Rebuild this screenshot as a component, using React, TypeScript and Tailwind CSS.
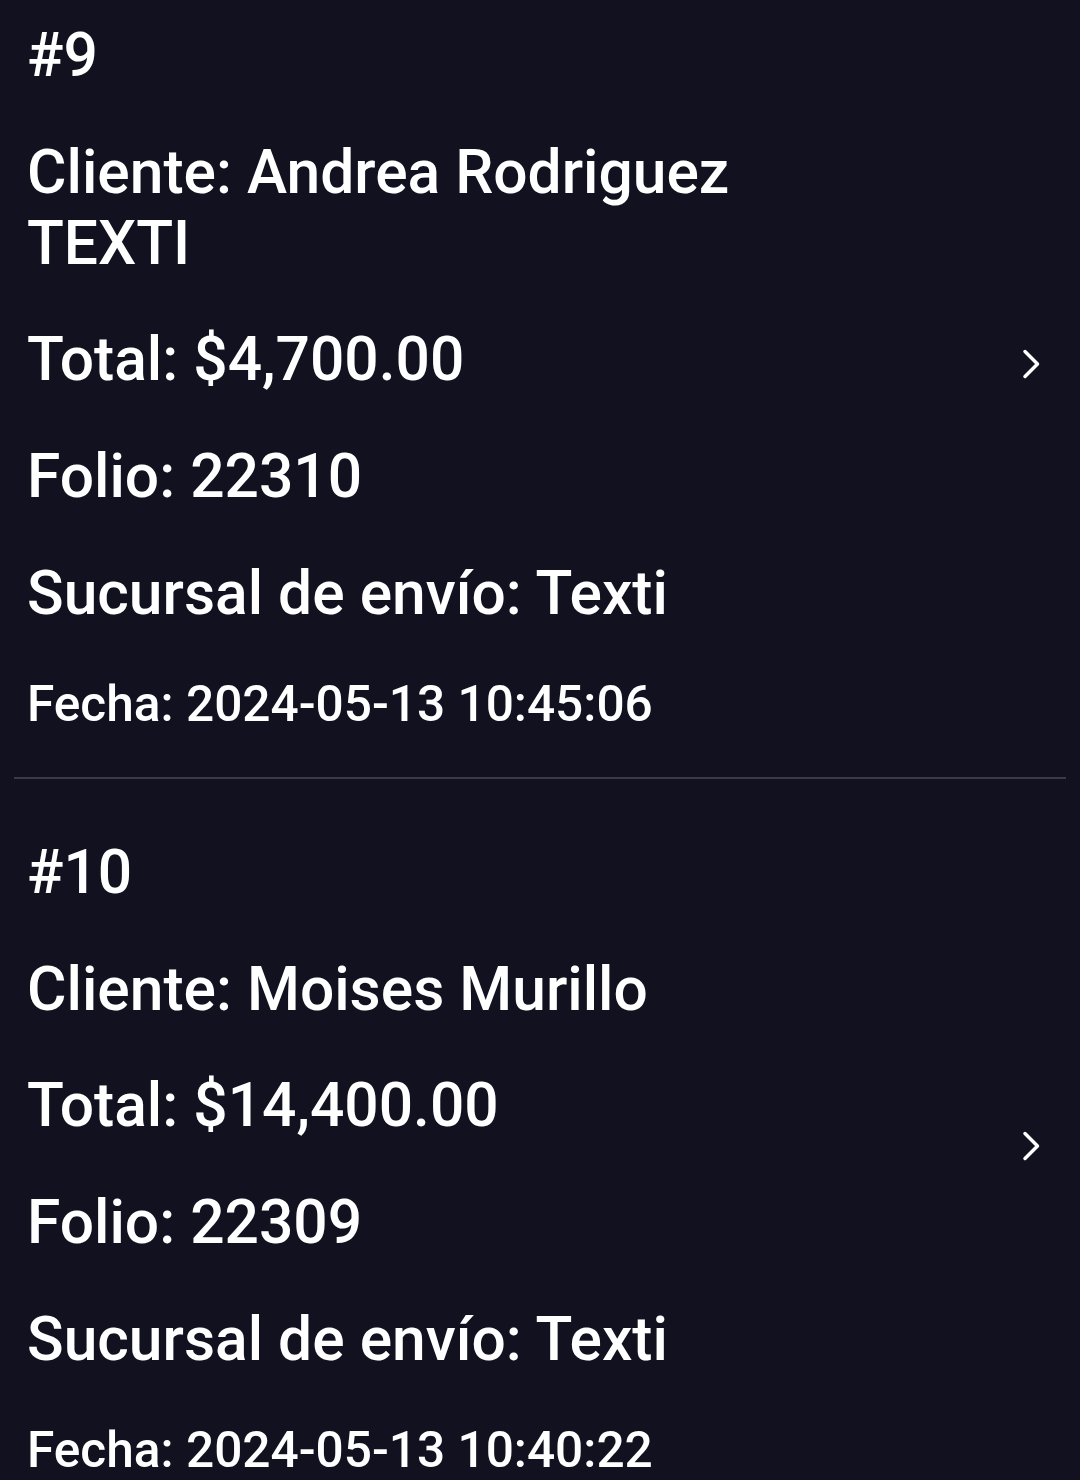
import React from 'react';

type Order = {
  num: number;
  cliente: string[];
  total: string;
  folio: string;
  sucursal: string;
  fecha: string;
};

const orders: Order[] = [
  { num: 9, cliente: ['Andrea Rodriguez', 'TEXTI'], total: '$4,700.00', folio: '22310', sucursal: 'Texti', fecha: '2024-05-13 10:45:06' },
  { num: 10, cliente: ['Moises Murillo'], total: '$14,400.00', folio: '22309', sucursal: 'Texti', fecha: '2024-05-13 10:40:22' },
];

const Chevron = () => (
  <svg width="24" height="36" viewBox="0 0 24 36" className="shrink-0 -translate-y-[13px]">
    <polyline points="6,5.5 18.5,18 6,30.5" fill="none" stroke="#ffffff" strokeWidth="3.5" strokeLinecap="round" strokeLinejoin="round" />
  </svg>
);

const OrderRow = ({ o }: { o: Order }) => (
  <div className="flex items-center pt-[58px] pb-[43px] pl-[27px] pr-[37px]">
    <div className="flex-1 flex flex-col gap-[45px] text-white font-medium">
      <div className="text-[60.5px] leading-[72px]">#{o.num}</div>
      <div className="text-[60.5px] leading-[71px]">
        Cliente: {o.cliente[0]}
        {o.cliente.slice(1).map(l => (
          <div key={l}>{l}</div>
        ))}
      </div>
      <div className="text-[60.5px] leading-[72px]">Total: {o.total}</div>
      <div className="text-[60.5px] leading-[72px]">Folio: {o.folio}</div>
      <div className="text-[60.5px] leading-[72px]">Sucursal de envío: {o.sucursal}</div>
      <div className="text-[49.6px] leading-[59px]">Fecha: {o.fecha}</div>
    </div>
    <Chevron />
  </div>
);

export default function App() {
  return (
    <div className="h-[1480px] overflow-hidden bg-[#111120]" style={{ fontFamily: 'Roboto, "Noto Sans", sans-serif' }}>
      <div className="-mt-[38px]">
        {orders.map((o, i) => (
          <div key={o.num}>
            {i > 0 && <div className="mx-[14px] h-[2px] bg-[#3a3a48]" />}
            <OrderRow o={o} />
          </div>
        ))}
      </div>
    </div>
  );
}
